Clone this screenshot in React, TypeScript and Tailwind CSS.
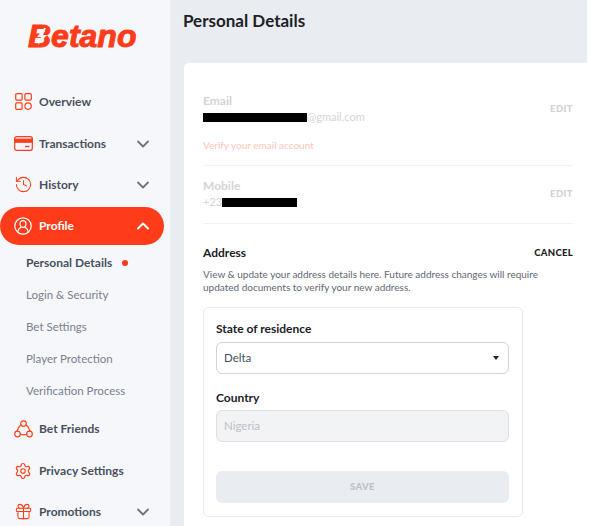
import { ChevronDown, ChevronUp, Gift, History, Settings } from 'lucide-react'
import type { ReactNode } from 'react'

function CardIcon() {
  return (
    <svg width="19" height="15" viewBox="0 0 19 15" fill="none" stroke="#ff3c19" strokeWidth="1.2">
      <rect x="0.7" y="0.7" width="17.6" height="13.6" rx="2" />
      <rect x="0.7" y="3.2" width="17.6" height="3" fill="#ff3c19" />
      <path d="M11 10.5h4.5" strokeWidth="1.4" />
    </svg>
  )
}

function FriendsIcon() {
  return (
    <svg width="19" height="18" viewBox="0 0 19 18" fill="none" stroke="#ff3c19" strokeWidth="1.2">
      <circle cx="9.5" cy="3.6" r="2.8" />
      <circle cx="3.5" cy="14" r="2.8" />
      <circle cx="15.5" cy="14" r="2.8" />
      <path d="M6.9 4.8C5 6.5 3.6 8.6 2.9 11.3M12.1 4.8c1.9 1.7 3.3 3.8 4 6.5M6.3 14.2c2 .8 4.4.8 6.4 0" />
    </svg>
  )
}

function OverviewIcon() {
  return (
    <svg width="17" height="17" viewBox="0 0 17 17" fill="none" stroke="#ff3c19" strokeWidth="1.2">
      <rect x="0.7" y="0.7" width="6.4" height="6.4" rx="1" />
      <rect x="9.9" y="0.7" width="6.4" height="6.4" rx="1" />
      <rect x="0.7" y="9.9" width="6.4" height="6.4" rx="1" />
      <circle cx="13.1" cy="13.1" r="3.2" />
    </svg>
  )
}

function ProfileIcon() {
  return (
    <svg width="18" height="18" viewBox="0 0 18 18" fill="none" stroke="white" strokeWidth="1.2">
      <circle cx="9" cy="9" r="8.2" />
      <ellipse cx="9" cy="7" rx="3" ry="3.4" />
      <path d="M3.8 15c.3-2.9 2-4.3 3.4-4.8M14.2 15c-.3-2.9-2-4.3-3.4-4.8" />
    </svg>
  )
}

function NavRow({ icon, label, chevron }: { icon: ReactNode; label: string; chevron?: boolean }) {
  return (
    <div className="flex h-[39px] items-center pl-[10px] pr-[17px]">
      <span className="flex w-[26px] justify-center">{icon}</span>
      <span className="ml-[3px] text-[12px] font-bold text-[#48505f]">{label}</span>
      {chevron && <ChevronDown size={20} strokeWidth={2.2} className="ml-auto text-[#6b7482]" />}
    </div>
  )
}

function SubItem({ label, active }: { label: string; active?: boolean }) {
  return (
    <div className={`flex h-[32px] items-center pl-[26px] ${active ? 'text-[12px] font-bold text-[#48505f]' : 'text-[11.5px] text-[#79818e]'}`}>
      {label}
      {active && <span className="ml-[10px] h-[6px] w-[6px] rounded-full bg-[#ff3c19]" />}
    </div>
  )
}

function LockedRow({ label, children }: { label: string; children: ReactNode }) {
  return (
    <div className="flex items-center justify-between">
      <div className="min-w-0">
        <p className="text-[12px] font-bold leading-[16px] text-[#d3d4d6]">{label}</p>
        {children}
      </div>
      <span className="text-[9.5px] font-black tracking-[0.4px] text-[#d0d2d5]">EDIT</span>
    </div>
  )
}

export default function App() {
  return (
    <div className="flex h-[526px] w-[590px] overflow-hidden bg-white font-['Lato',sans-serif]">
      <aside className="w-[170px] shrink-0 bg-[#f6f7fa]">
        <div className="flex h-[82px] items-start pl-[28px] pt-[17px]">
          <span className="relative font-['Liberation_Sans',sans-serif] text-[32px] font-bold italic leading-[38px] text-[#ff3c19] [-webkit-text-stroke:1px_#ff3c19]">
            Betano
            <svg className="absolute left-[7px] top-[11px]" width="14" height="17" viewBox="0 0 14 17" fill="#f6f7fa">
              <path d="M9 0 2 9h4l-3 8 9-10H8l3-7z" />
            </svg>
          </span>
        </div>
        <NavRow icon={<OverviewIcon />} label="Overview" />
        <div className="h-[3px]" />
        <NavRow icon={<CardIcon />} label="Transactions" chevron />
        <div className="h-[2px]" />
        <NavRow icon={<History size={19} strokeWidth={1.3} color="#ff3c19" />} label="History" chevron />
        <div className="mr-[6px] mt-[3px] flex h-[38px] items-center rounded-[19px] bg-[#ff3c19] pl-[10px] pr-[11px] text-white">
          <span className="flex w-[26px] justify-center"><ProfileIcon /></span>
          <span className="ml-[3px] text-[12px] font-bold">Profile</span>
          <ChevronUp size={20} strokeWidth={2.4} className="ml-auto" />
        </div>
        <div className="mt-[2px]">
          <SubItem label="Personal Details" active />
          <SubItem label="Login & Security" />
          <SubItem label="Bet Settings" />
          <SubItem label="Player Protection" />
          <SubItem label="Verification Process" />
        </div>
        <div className="mt-[2px]">
          <NavRow icon={<FriendsIcon />} label="Bet Friends" />
          <div className="h-[3px]" />
          <NavRow icon={<Settings size={18} strokeWidth={1.5} color="#ff3c19" />} label="Privacy Settings" />
          <div className="h-[2px]" />
          <NavRow icon={<Gift size={19} strokeWidth={1.3} color="#ff3c19" />} label="Promotions" chevron />
        </div>
      </aside>

      <main className="w-[417px] shrink-0 bg-[#e9ecf0] pl-[14px]">
        <h1 className="ml-[-1px] mt-[9px] h-[54px] text-[17px] font-bold leading-[24px] text-[#1c2027]">Personal Details</h1>
        <section className="h-[480px] rounded-tl-[5px] bg-white pl-[19px] pr-[14px] pt-[30px]">
          <LockedRow label="Email">
            <div className="flex h-[17px] items-center text-[11px] text-[#d3d4d6]">
              <span className="h-[9px] w-[104px] bg-black" />
              @gmail.com
            </div>
          </LockedRow>
          <p className="mt-[12px] text-[10px] leading-[14px] text-[#fdc5bb]">Verify your email account</p>
          <div className="mt-[13px] h-px bg-[#f1f2f4]" />
          <div className="mt-[12px]">
            <LockedRow label="Mobile">
              <div className="flex h-[17px] items-center text-[11px] text-[#d3d4d6]">
                +23
                <span className="h-[9px] w-[75px] bg-black" />
              </div>
            </LockedRow>
          </div>
          <div className="mt-[12px] h-px bg-[#f1f2f4]" />
          <div className="mt-[21px] flex items-center justify-between">
            <h2 className="text-[12px] font-bold leading-[16px] text-[#1c2027]">Address</h2>
            <button className="text-[9.5px] font-black tracking-[0.3px] text-[#1c2027]">CANCEL</button>
          </div>
          <p className="mt-[7px] max-w-[345px] text-[10px] leading-[13px] text-[#5f6672]">
            View &amp; update your address details here. Future address changes will require updated documents to verify your new address.
          </p>
          <div className="mt-[13px] h-[210px] w-[320px] rounded-[6px] border border-[#e8eaef] pl-[12px] pr-[13px] pt-[13px]">
            <p className="text-[12px] font-bold leading-[16px] text-[#1c2027]">State of residence</p>
            <div className="mt-[5px] flex h-[32px] items-center justify-between rounded-[6px] border border-[#cfd3da] px-[7px] text-[11.5px] text-[#48505f]">
              Delta
              <span className="mr-[2px] h-0 w-0 border-x-[3.5px] border-t-[4px] border-x-transparent border-t-[#1c2027]" />
            </div>
            <p className="mt-[16px] text-[12px] font-bold leading-[16px] text-[#1c2027]">Country</p>
            <div className="mt-[4px] flex h-[32px] items-center rounded-[6px] border border-[#dcdfe4] bg-[#f1f3f5] px-[7px] text-[11.5px] text-[#bcc0c7]">
              Nigeria
            </div>
            <button className="mt-[29px] h-[32px] w-full rounded-[6px] bg-[#e9ecf0] text-[9.5px] font-black tracking-[0.4px] text-[#bcc1c9]">
              SAVE
            </button>
          </div>
        </section>
      </main>
    </div>
  )
}
